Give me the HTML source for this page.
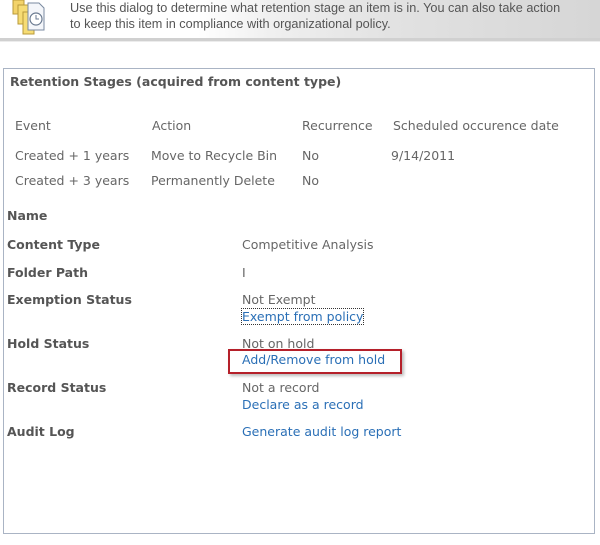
<!DOCTYPE html>
<html><head><style>
body{margin:0;width:600px;height:545px;background:#fff;position:relative;overflow:hidden;font-family:"DejaVu Sans",Verdana,sans-serif;font-size:12.5px;color:#666}
.hdr{position:absolute;left:0;top:0;width:600px;height:38px;background:linear-gradient(90deg,#fff 0%,#fff 33%,#f0f0f0 45%,#e2e2e2 65%,#d6d6d6 100%)}
.sep{position:absolute;left:0;top:38px;width:600px;height:3px;background:#d0d0d0;border-bottom:1px solid #ececec}
.ht{position:absolute;left:70px;top:0px;font-family:"Liberation Sans",Arial,sans-serif;font-size:12.7px;line-height:16px;color:#555}
.box{position:absolute;left:3px;top:68px;width:590px;height:464px;border:1px solid #aab4c4}
.a{position:absolute;white-space:nowrap}
.b{font-weight:bold;color:#555}
.l{color:#2a6fb6}
</style></head><body>
<div class="hdr"></div>
<div class="sep"></div>
<svg style="position:absolute;left:10px;top:0" width="40" height="38" viewBox="0 0 40 38">
<path d="M3 0 L14 0 L14 14 L3 14Z" fill="#f3d36a" stroke="#b89a3a" stroke-width="1"/>
<path d="M8 5 L19 5 L19 24 L8 24Z" fill="#f6dc74" stroke="#b89a3a" stroke-width="1"/>
<path d="M13 12 L24 12 L24 34 L13 34Z" fill="#f6dc74" stroke="#b89a3a" stroke-width="1"/>
<path d="M18 3 L29 3 L34 8 L34 30 L18 30Z" fill="#f4f6fa" stroke="#7a8aa0" stroke-width="1"/>
<circle cx="26" cy="19" r="6" fill="#fff" stroke="#6a7a90" stroke-width="1.2"/>
<path d="M26 15 L26 19 L29 19" fill="none" stroke="#6a7a90" stroke-width="1"/>
</svg>
<div class="ht">Use this dialog to determine what retention stage an item is in. You can also take action<br>to keep this item in compliance with organizational policy.</div>
<div class="box"></div>
<div class="a b" style="left:10px;top:74px">Retention Stages (acquired from content type)</div>
<div class="a" style="left:15px;top:118px">Event</div>
<div class="a" style="left:152px;top:118px">Action</div>
<div class="a" style="left:302px;top:118px">Recurrence</div>
<div class="a" style="left:393px;top:118px">Scheduled occurence date</div>
<div class="a" style="left:15px;top:148px">Created + 1 years</div>
<div class="a" style="left:151px;top:148px">Move to Recycle Bin</div>
<div class="a" style="left:302px;top:148px">No</div>
<div class="a" style="left:391px;top:148px">9/14/2011</div>
<div class="a" style="left:15px;top:173px">Created + 3 years</div>
<div class="a" style="left:151px;top:173px">Permanently Delete</div>
<div class="a" style="left:302px;top:173px">No</div>
<div class="a b" style="left:7px;top:208px">Name</div>
<div class="a b" style="left:7px;top:237px">Content Type</div>
<div class="a" style="left:242px;top:237px">Competitive Analysis</div>
<div class="a b" style="left:7px;top:265px">Folder Path</div>
<div class="a" style="left:242px;top:265px">I</div>
<div class="a b" style="left:7px;top:292px">Exemption Status</div>
<div class="a" style="left:242px;top:292px">Not Exempt</div>
<div class="a l" style="left:242px;top:309px;outline:1px dotted #333">Exempt from policy</div>
<div class="a b" style="left:7px;top:336px">Hold Status</div>
<div class="a" style="left:242px;top:336px">Not on hold</div>
<div class="a" style="left:228px;top:349px;width:170px;height:21px;border:2px solid #b5202a;box-shadow:2px 2px 3px #bbb"></div>
<div class="a l" style="left:242px;top:352px">Add/Remove from hold</div>
<div class="a b" style="left:7px;top:380px">Record Status</div>
<div class="a" style="left:242px;top:380px">Not a record</div>
<div class="a l" style="left:242px;top:397px">Declare as a record</div>
<div class="a b" style="left:7px;top:424px">Audit Log</div>
<div class="a l" style="left:242px;top:424px">Generate audit log report</div>
</body></html>
